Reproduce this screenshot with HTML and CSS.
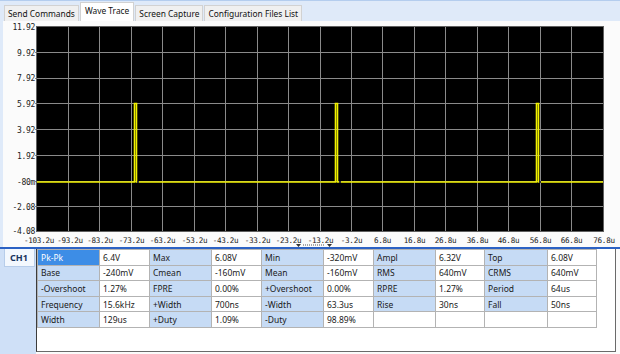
FILE: index.html
```html
<!DOCTYPE html>
<html lang="en">
<head>
  <meta charset="UTF-8" />
  <title>Wave Trace</title>
  <link rel="stylesheet" href="styles.css">
</head>
<body>

  <!-- Tabs -->
  <div class="tabs">
    <div class="tab">Send Commands</div>
    <div class="tab active">Wave Trace</div>
    <div class="tab">Screen Capture</div>
    <div class="tab">Configuration Files List</div>
  </div>

  <div class="page">
    <!-- Scope screen -->
    <svg class="scope" width="620" height="223" viewBox="0 21 620 223">
      <rect x="37" y="27" width="566" height="204" fill="#000"/>
      <path class="grid" d="M68.5 27V231M99.5 27V231M131.5 27V231M162.5 27V231M194.5 27V231M225.5 27V231M257.5 27V231M288.5 27V231M320.5 27V231M351.5 27V231M382.5 27V231M414.5 27V231M445.5 27V231M477.5 27V231M508.5 27V231M540.5 27V231M571.5 27V231
        M35 52.5H603M35 78.5H603M35 103.5H603M35 129.5H603M35 155.5H603M35 181.5H603M35 206.5H603"/>
      <rect class="frame" x="36.5" y="26.5" width="567" height="205"/>
      <polyline class="trace" points="37,182 134.5,182 134.5,103.5 136.5,103.5 136.5,182 335.5,182 335.5,103.5 337.5,103.5 337.5,182 536.5,182 536.5,103.5 538.5,103.5 538.5,182 603,182"/>
      <path class="marks" d="M137 182h2M339 182h2M539 182h2"/>

      <g class="ylab">
        <text x="35" y="30">11.92</text>
        <text x="35" y="56">9.92</text>
        <text x="35" y="81">7.92</text>
        <text x="35" y="107">5.92</text>
        <text x="35" y="133">3.92</text>
        <text x="35" y="159">1.92</text>
        <text x="35" y="185">-80m</text>
        <text x="35" y="210">-2.08</text>
        <text x="35" y="234">-4.08</text>
      </g>
      <g class="xlab">
        <text x="39" y="243">-103.2u</text>
        <text x="70" y="243">-93.2u</text>
        <text x="100" y="243">-83.2u</text>
        <text x="131.5" y="243">-73.2u</text>
        <text x="162.5" y="243">-63.2u</text>
        <text x="194.5" y="243">-53.2u</text>
        <text x="225.5" y="243">-43.2u</text>
        <text x="257.5" y="243">-33.2u</text>
        <text x="288.5" y="243">-23.2u</text>
        <text x="320.5" y="243">-13.2u</text>
        <text x="351.5" y="243">-3.2u</text>
        <text x="382.5" y="243">6.8u</text>
        <text x="414.5" y="243">16.8u</text>
        <text x="445.5" y="243">26.8u</text>
        <text x="477.5" y="243">36.8u</text>
        <text x="508.5" y="243">46.8u</text>
        <text x="540.5" y="243">56.8u</text>
        <text x="571.5" y="243">66.8u</text>
        <text x="604" y="243">76.8u</text>
      </g>
    </svg>

    <!-- Splitter -->
    <div class="splitter">
      <svg class="grip" width="36" height="3" viewBox="0 0 36 3">
        <path d="M0 0h5l-2.5 3z M31 0h5l-2.5 3z" fill="#333"/>
        <path d="M7 1h22" stroke="#555" stroke-dasharray="1 1"/>
      </svg>
    </div>

    <!-- Measurements -->
    <div class="measure">
      <div class="channels">
        <div class="ch">CH1</div>
      </div>
      <div class="sheet">
        <table>
          <colgroup>
            <col style="width:62px"><col style="width:50px">
            <col style="width:62px"><col style="width:50px">
            <col style="width:62px"><col style="width:50px">
            <col style="width:62px"><col style="width:49px">
            <col style="width:63px"><col style="width:49px">
          </colgroup>
          <tr>
            <td class="key sel">Pk-Pk</td><td>6.4V</td>
            <td class="key">Max</td><td>6.08V</td>
            <td class="key">Min</td><td>-320mV</td>
            <td class="key">Ampl</td><td>6.32V</td>
            <td class="key">Top</td><td>6.08V</td>
          </tr>
          <tr>
            <td class="key">Base</td><td>-240mV</td>
            <td class="key">Cmean</td><td>-160mV</td>
            <td class="key">Mean</td><td>-160mV</td>
            <td class="key">RMS</td><td>640mV</td>
            <td class="key">CRMS</td><td>640mV</td>
          </tr>
          <tr>
            <td class="key">-Overshoot</td><td>1.27%</td>
            <td class="key">FPRE</td><td>0.00%</td>
            <td class="key">+Overshoot</td><td>0.00%</td>
            <td class="key">RPRE</td><td>1.27%</td>
            <td class="key">Period</td><td>64us</td>
          </tr>
          <tr>
            <td class="key">Frequency</td><td>15.6kHz</td>
            <td class="key">+Width</td><td>700ns</td>
            <td class="key">-Width</td><td>63.3us</td>
            <td class="key">Rise</td><td>30ns</td>
            <td class="key">Fall</td><td>50ns</td>
          </tr>
          <tr>
            <td class="key">Width</td><td>129us</td>
            <td class="key">+Duty</td><td>1.09%</td>
            <td class="key">-Duty</td><td>98.89%</td>
            <td></td><td></td>
            <td></td><td></td>
          </tr>
        </table>
      </div>
    </div>
  </div>

</body>
</html>
```

FILE: styles.css
```css
* {
  margin: 0;
  padding: 0;
  box-sizing: border-box;
}

body {
  width: 620px;
  height: 354px;
  overflow: hidden;
  background: #fbfbfb;
  font-family: "Noto Sans", "Open Sans", sans-serif;
  font-size: 8.5px;
  color: #1a1a1a;
}

/* Tabs */
.tabs {
  display: flex;
  align-items: flex-end;
  height: 21px;
  padding-left: 4px;
  background: #dfeaf9;
  border-top: 1px solid #b4cdee;
}

.tab {
  height: 16px;
  padding: 0 3px;
  line-height: 15px;
  font-size: 8.4px;
  background: #f0f0f0;
  border: 1px solid #d2d2d2;
  border-bottom: none;
  margin-right: 1px;
  color: #111;
}

.tab.active {
  height: 19px;
  line-height: 16px;
  background: #fff;
  padding: 0 4px;
}

.page {
  border-left: 3px solid #dfeaf9;
}

/* Scope */
.scope {
  display: block;
  margin-left: -3px;
}

.grid {
  stroke: #8a8a8a;
  stroke-width: 1;
  fill: none;
}

.frame {
  fill: none;
  stroke: #606060;
}

.trace {
  fill: none;
  stroke: #f2f200;
  stroke-width: 1.6;
}

.marks {
  stroke: #303030;
  stroke-width: 2;
}

.ylab text,
.xlab text {
  font-family: "DejaVu Sans Mono", monospace;
  font-size: 8px;
  fill: #222;
}

.ylab text {
  text-anchor: end;
  letter-spacing: -0.3px;
}

.xlab text {
  text-anchor: middle;
  font-size: 7.6px;
  letter-spacing: -0.3px;
}

/* Splitter */
.splitter {
  height: 5px;
  margin-left: -3px;
  border-bottom: 2px solid #2c62c4;
}

.grip {
  display: block;
  margin-left: 296px;
}

/* Measurements */
.measure {
  display: flex;
  margin-left: -3px;
  height: 106px;
}

.channels {
  width: 36px;
  padding-left: 4px;
  background: #cfe0f7;
}

.ch {
  width: 31px;
  height: 18px;
  line-height: 17px;
  padding-left: 5px;
  font-weight: bold;
  font-size: 9px;
  color: #17345f;
  background: #f3f8fe;
  border: 1px solid #b7cdea;
  border-top: none;
}

.sheet {
  width: 580px;
  height: 103px;
  background: #fff;
  border-left: 1px solid #3c3c3c;
  border-right: 1px solid #6a6a6a;
  border-bottom: 1px solid #6a6a6a;
}

table {
  border-collapse: collapse;
  table-layout: fixed;
  width: 559px;
}

td {
  height: 15.6px;
  padding: 0 3px;
  border: 1px solid #b3b3b3;
  white-space: nowrap;
  overflow: hidden;
}

td.key {
  background: #c6dbf5;
}

td.sel {
  background: #3d8de6;
  color: #fff;
}
```
